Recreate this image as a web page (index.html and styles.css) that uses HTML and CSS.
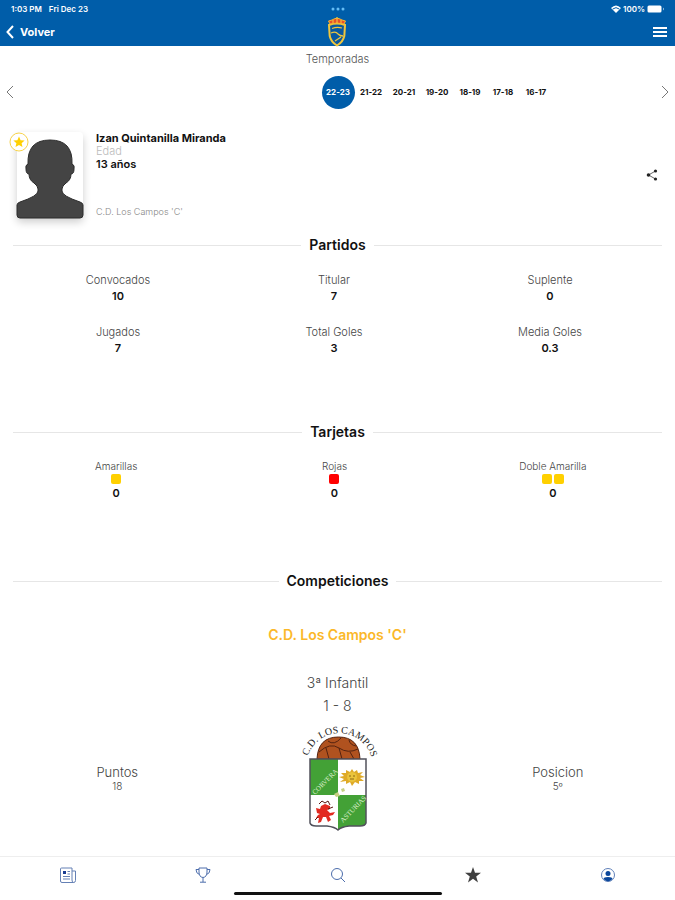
FILE: index.html
```html
<!DOCTYPE html>
<html lang="es">
<head>
<meta charset="utf-8">
<meta name="viewport" content="width=device-width, initial-scale=1">
<title>Izan Quintanilla Miranda</title>
<link rel="stylesheet" href="styles.css">
</head>
<body>
<header class="top">
  <div class="status">
    <div class="status-side"><span>1:03 PM</span><span>Fri Dec 23</span></div>
    <svg class="dots" viewBox="0 0 14 4" aria-hidden="true"><circle cx="2" cy="2" r="1.5"/><circle cx="7" cy="2" r="1.5"/><circle cx="12" cy="2" r="1.5"/></svg>
    <div class="status-side status-end">
      <svg class="wifi" viewBox="0 0 10 8" aria-hidden="true"><path d="M0 3Q5-2 10 3L5 8Z"/><path class="wifi-gap" d="M1.600 4.100Q5 1.200 8.400 4.100"/></svg>
      <span>100%</span>
      <svg class="battery" viewBox="0 0 18 8" aria-hidden="true"><rect x=".5" y=".5" width="14" height="7" rx="1.500"/><path d="M16 2.500v3q1.500-1.500 0-3"/></svg>
    </div>
  </div>
  <div class="bar">
    <a class="back" href="#"><svg viewBox="0 0 8 12" aria-hidden="true"><path d="M7 0 1.500 6 7 12"/></svg>Volver</a>
    <svg class="logo" viewBox="0 0 20 30" aria-hidden="true">
      <path d="M2 8Q10 5 18 8L17.300 19Q16 25 10 28.500 4 25 2.700 19Z" fill="#0a58a0" stroke="#efc63d" stroke-width="2"/>
      <path d="M5 11.500q5-2 10-.5M4 16q5-2 7 1 2 2 5 2M8 24l6-4" fill="none" stroke="#efc63d" stroke-width="1.300"/>
      <path d="M3 7 1.500 4 5 3l2-1 3-1 3 1 2 1 3.500 1L17 7Q10 5 3 7Z" fill="#e8502a" stroke="#f4b731"/>
      <path d="M10 0v6M6 3v3M14 3v3" stroke="#f8cf3f"/>
    </svg>
    <button class="icon-btn menu" aria-label="Menú"><svg viewBox="0 0 14 12" aria-hidden="true"><path d="M0 2h14M0 6h14M0 10h14"/></svg></button>
  </div>
</header>

<main>
  <section class="seasons">
    <h2>Temporadas</h2>
    <div class="carousel">
      <button class="icon-btn arrow" aria-label="Anterior"><svg viewBox="0 0 8 14" aria-hidden="true"><path d="M7 1 1 7l6 6"/></svg></button>
      <div class="years">
        <button class="year active">22-23</button><button class="year">21-22</button><button class="year">20-21</button><button class="year">19-20</button><button class="year">18-19</button><button class="year">17-18</button><button class="year">16-17</button>
      </div>
      <button class="icon-btn arrow" aria-label="Siguiente"><svg viewBox="0 0 8 14" aria-hidden="true"><path d="m1 1 6 6-6 6"/></svg></button>
    </div>
  </section>

  <section class="player">
    <div class="photo">
      <svg class="person" viewBox="0 0 66 80" aria-hidden="true"><path d="M0 67q0-2 3-3 18-6 18-11v-2q0-3-4-6-5-3-5-9-3 0-3-5-1-4 2-5Q10 2 33 2t22 24q3 1 2 5 0 5-3 5 0 6-5 9-4 3-4 6v2q0 5 18 11 3 1 3 3v10q0 3-3 3H3q-3 0-3-3Z"/></svg>
      <svg class="badge" viewBox="0 0 20 20" aria-hidden="true"><circle cx="10" cy="10" r="9"/><path d="m10 4.500 1.600 3.700 4 .3-3 2.700.9 3.900-3.500-2-3.500 2 .9-3.900-3-2.700 4-.3Z"/></svg>
    </div>
    <div class="info">
      <h1>Izan Quintanilla Miranda</h1>
      <span class="pale">Edad</span>
      <strong>13 años</strong>
      <span class="club">C.D. Los Campos 'C'</span>
    </div>
    <button class="icon-btn share" aria-label="Compartir"><svg viewBox="0 0 12 12" aria-hidden="true"><path d="M9.500 2 2.500 6l7 4"/><circle cx="9.500" cy="2" r="1.600"/><circle cx="2.500" cy="6" r="1.800"/><circle cx="9.500" cy="10" r="1.600"/></svg></button>
  </section>

  <section class="matches">
    <h2 class="divider">Partidos</h2>
    <dl class="stats">
      <div><dt>Convocados</dt><dd>10</dd></div>
      <div><dt>Titular</dt><dd>7</dd></div>
      <div><dt>Suplente</dt><dd>0</dd></div>
      <div><dt>Jugados</dt><dd>7</dd></div>
      <div><dt>Total Goles</dt><dd>3</dd></div>
      <div><dt>Media Goles</dt><dd>0.3</dd></div>
    </dl>
  </section>

  <section class="cards">
    <h2 class="divider">Tarjetas</h2>
    <dl class="stats small">
      <div><dt>Amarillas<span class="chips"><i class="chip"></i></span></dt><dd>0</dd></div>
      <div><dt>Rojas<span class="chips"><i class="chip red"></i></span></dt><dd>0</dd></div>
      <div><dt>Doble Amarilla<span class="chips"><i class="chip"></i><i class="chip"></i></span></dt><dd>0</dd></div>
    </dl>
  </section>

  <section class="competitions">
    <h2 class="divider">Competiciones</h2>
    <h3>C.D. Los Campos 'C'</h3>
    <p class="league">3ª Infantil</p>
    <p class="league">1 - 8</p>
    <div class="standing">
      <div class="figure"><span>Puntos</span><small>18</small></div>
      <svg class="crest" viewBox="0 0 76 108" role="img" aria-label="C.D. Los Campos">
        <defs>
          <path id="arc" d="M8 31A33 33 0 0 1 72 36"/>
          <clipPath id="shield"><path d="M10 34H66V98Q65 101 60 101H49Q41 102 38 105 35 102 27 101H16Q11 101 10 98Z"/></clipPath>
        </defs>
        <path d="M17 34Q18 12 38.500 12T60 34Z" fill="#b0521f" stroke="#54220f"/>
        <path d="M19 27q11-10 20-4 9 6 19 1M28 16q6 5 13-3M39 23l3 11M49 15q1 5 7 6M26 23l3 11M50 27l4 7" fill="none" stroke="#54220f"/>
        <g clip-path="url(#shield)">
          <path d="M8 32h60v76H8Z" fill="#fff"/>
          <path d="M8 32h30v38H8ZM38 70h30v38H38Z" fill="#43a136"/>
        </g>
        <path d="M10 34H66V98Q65 101 60 101H49Q41 102 38 105 35 102 27 101H16Q11 101 10 98Z" fill="none" stroke="#51515b" stroke-width="1.500"/>
        <path d="m52 44 2 3 3-2 1 3 5-1-3 3 5 2-5 1 4 3-5 0 0 3-4-2-3 4-2-4-4 2 0-3-6 1 4-3-5-2 5-1-3-3 5 0 0-3 4 2Z" fill="#dfaa27"/>
        <circle cx="52" cy="52" r="5" fill="#eac33b"/><path d="M49 51h2M53 51h2M50 54h4" stroke="#8c6816"/>
        <path d="m16 83 4 1 1-3 4-2 5 2 0 3-3 1 3 3 5-1-2 3-4 1 2 4-3 2-2-5-3 0-2 5-3 1 1-5-3 0 2-3 2-1-3-1Z" fill="#e22a20"/>
        <path d="M19 79l3-3 3 2 3-2 2 4M28 84l5-2M18 92l-3 3" fill="none" stroke="#5c1712"/>
        <path d="m34 69 4-2 2 4-4 1ZM41 64l3-1 1 3-3 1Z" fill="#c6cf83"/>
        <text class="crest-name"><textPath href="#arc">C.D. LOS CAMPOS</textPath></text>
        <text class="crest-band" transform="translate(15 70) rotate(-45)">CORVERA</text>
        <text class="crest-band" transform="translate(43 98) rotate(-46)">ASTURIAS</text>
      </svg>
      <div class="figure"><span>Posicion</span><small>5º</small></div>
    </div>
  </section>
</main>

<nav class="tabs" aria-label="Principal">
  <a href="#" aria-label="Noticias"><svg viewBox="0 0 16 16" aria-hidden="true"><path d="M12 1H1.500Q.5 1 .5 2v12q0 1.500 1.500 1.500h11.500M12 1v12q0 2.500 1.700 2.500t1.800-2V4H12" fill="none" stroke="#6480b5"/><path d="M3 4h3v3H3Z" fill="#183b91"/><path d="M7.500 4.500H10M7.500 7H10M3 9.500h7M3 12h7" stroke="#6480b5"/></svg></a>
  <a href="#" aria-label="Competiciones"><svg viewBox="0 0 16 16" aria-hidden="true"><path d="M4 1h8v4q0 5-4 5.500Q4 10 4 5ZM4 2.500H1q0 4 3.500 5M12 2.500h3q0 4-3.500 5M8 10.500V15M5 15.200h6" fill="none" stroke="#4c6dac"/></svg></a>
  <a href="#" aria-label="Buscar"><svg viewBox="0 0 16 16" aria-hidden="true"><circle cx="7" cy="7" r="5.500" fill="none" stroke="#4c6dac"/><path d="m11 11 4 4" stroke="#4c6dac"/></svg></a>
  <a href="#" aria-label="Favoritos"><svg viewBox="0 0 16 16" aria-hidden="true"><path d="m8 0 2 5.800h6l-4.800 3.700L13 15.500l-5-3.700-5 3.700 1.800-6L0 5.800h6Z" fill="#404040"/></svg></a>
  <a href="#" aria-label="Perfil"><svg viewBox="0 0 16 16" aria-hidden="true"><circle cx="8" cy="8" r="6.500" fill="#fff" stroke="#5f80b9"/><circle cx="8" cy="6.500" r="2.500" fill="#0b479b"/><path d="M3.500 12q0-2 4.500-2t4.500 2Q8 16.500 3.500 12Z" fill="#0b479b"/></svg></a>
  <span class="home"></span>
</nav>
</body>
</html>
```
FILE: styles.css
```css
* { box-sizing: border-box; }

body {
  margin: 0;
  min-height: 100vh;
  display: flex;
  flex-direction: column;
  background: #fff;
  color: #111;
  font-family: Inter, "Open Sans", sans-serif;
  font-size: 11px;
  line-height: 16px;
}

h1, h2, h3, p, dl, dd { margin: 0; }
a { color: inherit; text-decoration: none; }
button { margin: 0; padding: 0; border: 0; background: none; color: inherit; font: inherit; }
svg { display: block; overflow: visible; }

.icon-btn { display: grid; place-items: center; }

.top { background: #005da9; color: #fff; height: 46px; }

.status {
  display: grid;
  grid-template-columns: 1fr auto 1fr;
  align-items: center;
  height: 17px;
  padding: 0 10px 0 11px;
  font-size: 8px;
  font-weight: 600;
}
.status-side { display: flex; gap: 7px; align-items: center; }
.status-end { justify-content: flex-end; gap: 2px; }
.dots { width: 14px; height: 4px; fill: #64bdf5; }
.wifi { width: 10px; height: 8px; fill: #fff; }
.wifi-gap { fill: none; stroke: #005da9; stroke-width: 1; }
.battery { width: 18px; height: 8px; fill: #fff; }

.bar {
  display: grid;
  grid-template-columns: 1fr auto 1fr;
  align-items: center;
  height: 29px;
  padding: 0 8px 0 6px;
}
.back { display: flex; align-items: center; gap: 6px; font-weight: 700; }
.back svg { width: 8px; height: 12px; fill: none; stroke: #fff; stroke-width: 2; }
.logo { width: 20px; height: 30px; }
.menu { justify-self: end; }
.menu svg { width: 14px; height: 12px; stroke: #fff; stroke-width: 2; }

.seasons { padding-top: 5px; }
.seasons h2 {
  text-align: center;
  font-size: 11px;
  font-weight: 300;
  color: #555;
}
.carousel { display: flex; align-items: center; padding: 8px 4px 0; }
.arrow { width: 12px; height: 34px; }
.arrow svg { width: 8px; height: 14px; fill: none; stroke: #777; }
.years {
  flex: 1;
  display: flex;
  padding-left: calc(50% - 28px);
  overflow: hidden;
}
.year { width: 33px; height: 33px; flex: none; font-size: 8px; font-weight: 700; white-space: nowrap; }
.active { border-radius: 50%; background: #005da9; color: #fff; }

.player { display: flex; padding: 23px 17px 19px; }
.photo {
  position: relative;
  width: 66px;
  height: 86px;
  padding-top: 6px;
  border-radius: 4px;
  box-shadow: 0 4px 8px #0003;
}
.person { width: 66px; height: 80px; fill: #444; stroke: #2b2b2b; stroke-width: 1; }
.badge { position: absolute; left: -8px; top: 0; width: 20px; height: 20px; fill: #fff; stroke: #f7d34b; }
.badge path { fill: #ffd000; stroke: none; }
.info { flex: 1; display: flex; flex-direction: column; padding-left: 13px; line-height: 13px; }
.info h1 { font-size: 11px; font-weight: 700; }
.info strong { font-weight: 600; }
.pale { color: #bbb; font-weight: 300; }
.club { margin-top: auto; color: #888; font-size: 9px; font-weight: 300; }
.share { align-self: center; width: 12px; }
.share svg { width: 12px; height: 12px; fill: #222; stroke: #666; stroke-width: 1; }
.share path { fill: none; }
.share circle { stroke: none; }

.divider {
  display: flex;
  align-items: center;
  gap: 8px;
  padding: 0 13px;
  font-size: 14px;
  font-weight: 600;
}
.divider::before, .divider::after { content: ""; flex: 1; height: 1px; background: #e6e6e6; }

.stats {
  display: grid;
  grid-template-columns: repeat(3, 1fr);
  row-gap: 20px;
  padding: 19px 17px 0 10px;
  text-align: center;
}
.stats dt { font-weight: 300; color: #444; }
.stats dd { font-weight: 600; }
.matches { min-height: 187px; }
.cards { min-height: 149px; }
.small { padding: 18px 13px 0 7px; }
.small dt { font-size: 10px; }
.small dd { line-height: 19px; }
.chips { display: flex; justify-content: center; gap: 2px; }
.chip { width: 10px; height: 10px; border-radius: 2px; background: #ffd000; }
.red { background: #f00; }

.competitions { text-align: center; }
.competitions h3 { padding: 38px 0 28px; font-size: 14px; font-weight: 600; color: #fbb829; line-height: 16px; }
.league { font-size: 14px; font-weight: 300; line-height: 23px; color: #444; }
.standing {
  display: grid;
  grid-template-columns: 1fr auto 1fr;
  align-items: center;
  padding: 8px 0 20px;
}
.figure { display: flex; flex-direction: column; font-size: 13px; line-height: 14px; font-weight: 300; color: #444; }
.figure:first-child { padding-right: 65px; }
.figure:last-child { padding-left: 65px; }
.figure small { font-size: 10px; }
.crest { width: 76px; height: 108px; }
.crest-name { font: 10px "Liberation Serif", serif; fill: #222; }
.crest-band { font: 7px "Liberation Serif", serif; fill: #dbeecb; }

.tabs {
  position: relative;
  display: grid;
  grid-template-columns: repeat(5, 1fr);
  justify-items: center;
  height: 44px;
  margin-top: auto;
  padding-top: 10px;
  border-top: 1px solid #eee;
}
.tabs svg { width: 16px; height: 16px; }
.home {
  position: absolute;
  bottom: 5px;
  left: 50%;
  width: 208px;
  height: 3px;
  border-radius: 2px;
  background: #111;
  transform: translateX(-50%);
}
```
